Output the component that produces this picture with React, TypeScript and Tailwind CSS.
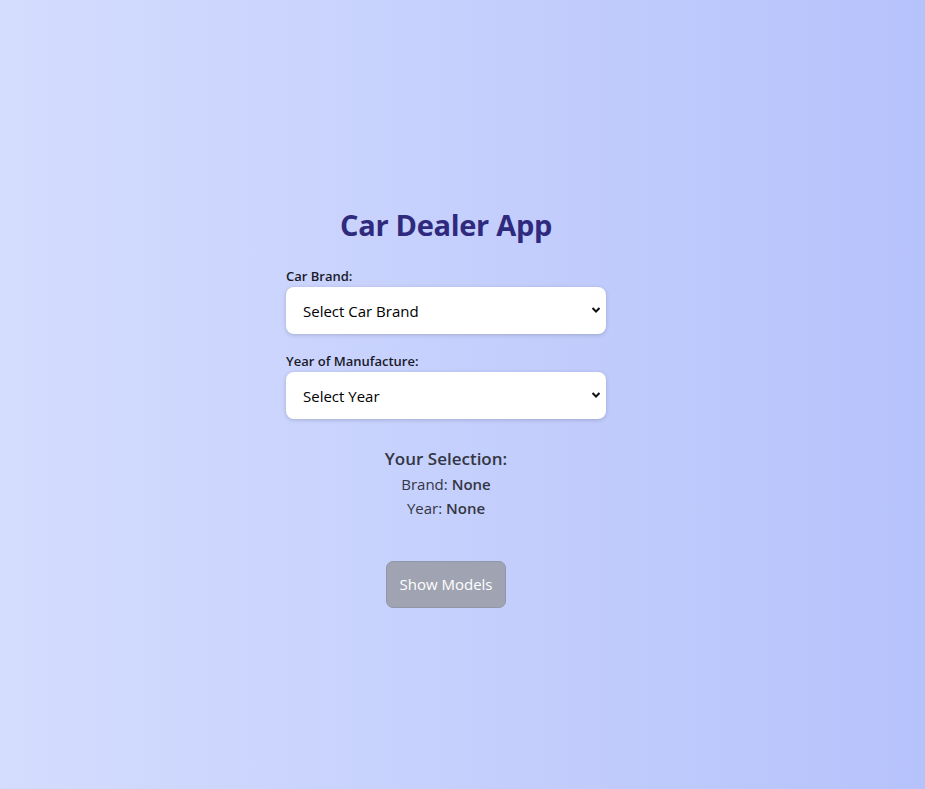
import React from "react";

export default function App() {
  return (
    <div
      className="min-h-[789px] w-full bg-gradient-to-r from-[#d4ddfe] to-[#b6c2fb] flex justify-center pr-[33px] pt-[203px]"
      style={{ fontFamily: '"Open Sans", "Noto Sans", Arial, sans-serif' }}
    >
      <div className="w-[320px] flex flex-col">
        <h1 className="text-center text-[29px] leading-[44px] font-bold text-[#2f2a7d] tracking-[-0.3px]">
          Car Dealer App
        </h1>
        <label className="mt-[20px] text-[13px] leading-[18px] font-semibold text-[#1a1a2a]">
          Car Brand:
        </label>
        <div className="relative mt-[2px] h-[47px] bg-white rounded-[8px] shadow-[0_1px_4px_rgba(0,0,0,0.18)] flex items-center px-[17px] pt-[2px]">
          <span className="text-[15px] text-black">Select Car Brand</span>
          <svg className="absolute right-[5px] top-[19px]" width="10" height="8" viewBox="0 0 10 8">
            <path d="M1.5 2 L5 5.5 L8.5 2" stroke="#111" strokeWidth="2" fill="none" />
          </svg>
        </div>
        <label className="mt-[18px] text-[13px] leading-[18px] font-semibold text-[#1a1a2a]">
          Year of Manufacture:
        </label>
        <div className="relative mt-[2px] h-[47px] bg-white rounded-[8px] shadow-[0_1px_4px_rgba(0,0,0,0.18)] flex items-center px-[17px] pt-[2px]">
          <span className="text-[15px] text-black">Select Year</span>
          <svg className="absolute right-[5px] top-[19px]" width="10" height="8" viewBox="0 0 10 8">
            <path d="M1.5 2 L5 5.5 L8.5 2" stroke="#111" strokeWidth="2" fill="none" />
          </svg>
        </div>
        <div className="mt-[28px] flex flex-col items-center text-[#333644]">
          <div className="text-[17px] leading-[24px] font-semibold">Your Selection:</div>
          <div className="text-[15px] leading-[24px] mt-[1px]">
            Brand: <span className="font-semibold">None</span>
          </div>
          <div className="text-[15px] leading-[24px]">
            Year: <span className="font-semibold">None</span>
          </div>
        </div>
        <div className="mt-[41px] flex justify-center">
          <button className="w-[120px] h-[47px] rounded-[7px] bg-[#a0a4b2] border border-[#9097a8] text-white text-[15px]">
            Show Models
          </button>
        </div>
      </div>
    </div>
  );
}
